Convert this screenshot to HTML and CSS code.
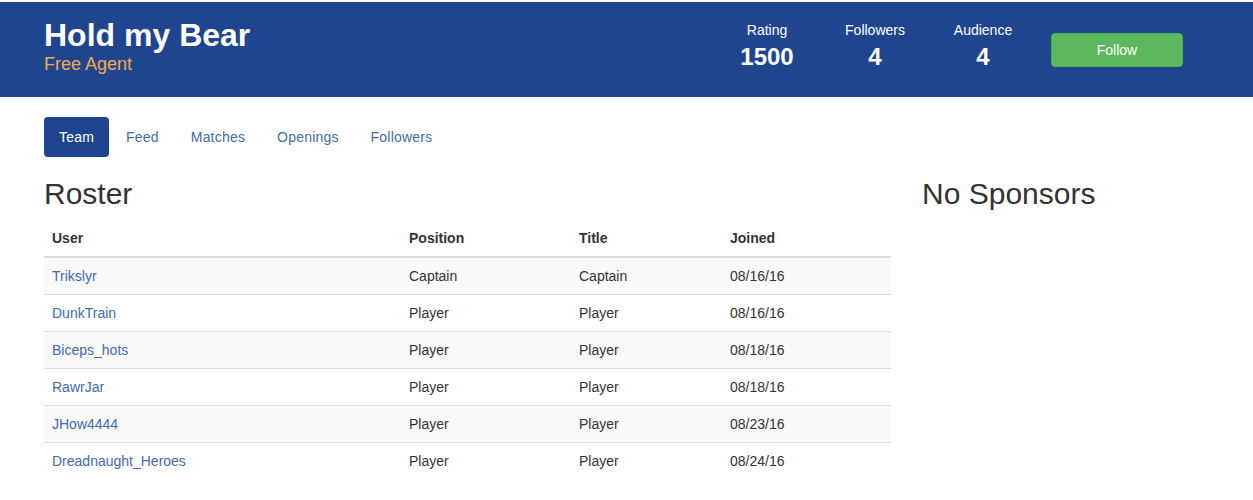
FILE: index.html
```html
<!DOCTYPE html>
<html>
<head>
<meta charset="utf-8">
<link rel="stylesheet" href="styles.css">
</head>
<body>
<header class="banner">
  <div class="team-id">
    <h1 class="team-name">Hold my Bear</h1>
    <div class="team-status">Free Agent</div>
  </div>
  <div class="stats">
    <div class="stat"><div class="stat-label">Rating</div><div class="stat-value">1500</div></div>
    <div class="stat"><div class="stat-label">Followers</div><div class="stat-value">4</div></div>
    <div class="stat"><div class="stat-label">Audience</div><div class="stat-value">4</div></div>
  </div>
  <button class="btn-follow">Follow</button>
</header>
<main class="page">
  <nav class="pills">
    <a class="pill active">Team</a>
    <a class="pill">Feed</a>
    <a class="pill">Matches</a>
    <a class="pill">Openings</a>
    <a class="pill">Followers</a>
  </nav>
  <div class="columns">
    <section class="roster">
      <h2 class="heading">Roster</h2>
      <table class="table">
        <thead>
          <tr><th class="c-user">User</th><th class="c-pos">Position</th><th class="c-title">Title</th><th>Joined</th></tr>
        </thead>
        <tbody>
          <tr><td><a class="link">Trikslyr</a></td><td>Captain</td><td>Captain</td><td>08/16/16</td></tr>
          <tr><td><a class="link">DunkTrain</a></td><td>Player</td><td>Player</td><td>08/16/16</td></tr>
          <tr><td><a class="link">Biceps_hots</a></td><td>Player</td><td>Player</td><td>08/18/16</td></tr>
          <tr><td><a class="link">RawrJar</a></td><td>Player</td><td>Player</td><td>08/18/16</td></tr>
          <tr><td><a class="link">JHow4444</a></td><td>Player</td><td>Player</td><td>08/23/16</td></tr>
          <tr><td><a class="link">Dreadnaught_Heroes</a></td><td>Player</td><td>Player</td><td>08/24/16</td></tr>
        </tbody>
      </table>
    </section>
    <aside class="sponsors">
      <h2 class="heading">No Sponsors</h2>
    </aside>
  </div>
</main>
</body>
</html>
```
FILE: styles.css
```css
* { box-sizing: border-box; }
html, body { margin: 0; padding: 0; }
body {
  font-family: "Liberation Sans", Arial, sans-serif;
  font-size: 14px;
  line-height: 20px;
  color: #333;
  background: #fff;
}
.banner {
  margin-top: 2px;
  height: 95px;
  background: #20458f;
  display: flex;
  align-items: flex-start;
  padding: 0 70px 0 44px;
  color: #fff;
}
.team-id { margin-top: 15px; flex: 1; }
.team-name {
  margin: 0;
  font-size: 32px;
  line-height: 36px;
  font-weight: bold;
  color: #fff;
}
.team-status {
  margin-top: 1px;
  font-size: 18px;
  line-height: 20px;
  color: #f0ad4e;
}
.stats { display: flex; margin-top: 18px; }
.stat { width: 108px; text-align: center; }
.stat-label { font-size: 14px; line-height: 20px; }
.stat-value { font-size: 24px; line-height: 28px; font-weight: bold; margin-top: 3px; }
.btn-follow {
  margin-top: 31px;
  margin-left: 14px;
  width: 132px;
  height: 34px;
  border: 1px solid #4cae4c;
  border-radius: 4px;
  background: #5cb85c;
  color: #fff;
  font-family: inherit;
  font-size: 14px;
  line-height: 20px;
  padding: 6px 12px;
}
.page { padding: 20px 44px 0 44px; }
.pills { display: flex; gap: 2px; }
.pill {
  display: block;
  padding: 10px 15px;
  line-height: 20px;
  letter-spacing: 0.2px;
  color: #3f6bb3;
  border-radius: 4px;
  text-decoration: none;
}
.pill.active { background: #20458f; color: #fff; }
.columns {
  display: grid;
  grid-template-columns: 847px 1fr;
  column-gap: 31px;
}
.heading {
  margin: 20px 0 10px 0;
  font-size: 30px;
  line-height: 33px;
  font-weight: 500;
  color: #333;
}
.table { width: 100%; border-collapse: collapse; border-spacing: 0; }
.table th, .table td {
  padding: 8px;
  line-height: 20px;
  text-align: left;
  vertical-align: top;
}
.table th { font-weight: bold; border-bottom: 2px solid #ddd; }
.table td { border-top: 1px solid #ddd; }
.table tbody tr:first-child td { border-top: 0; }
.table tbody tr:nth-child(odd) { background: #f9f9f9; }
.c-user { width: 357px; }
.c-pos { width: 170px; }
.c-title { width: 151px; }
.link { color: #3f6bb3; text-decoration: none; }
```
